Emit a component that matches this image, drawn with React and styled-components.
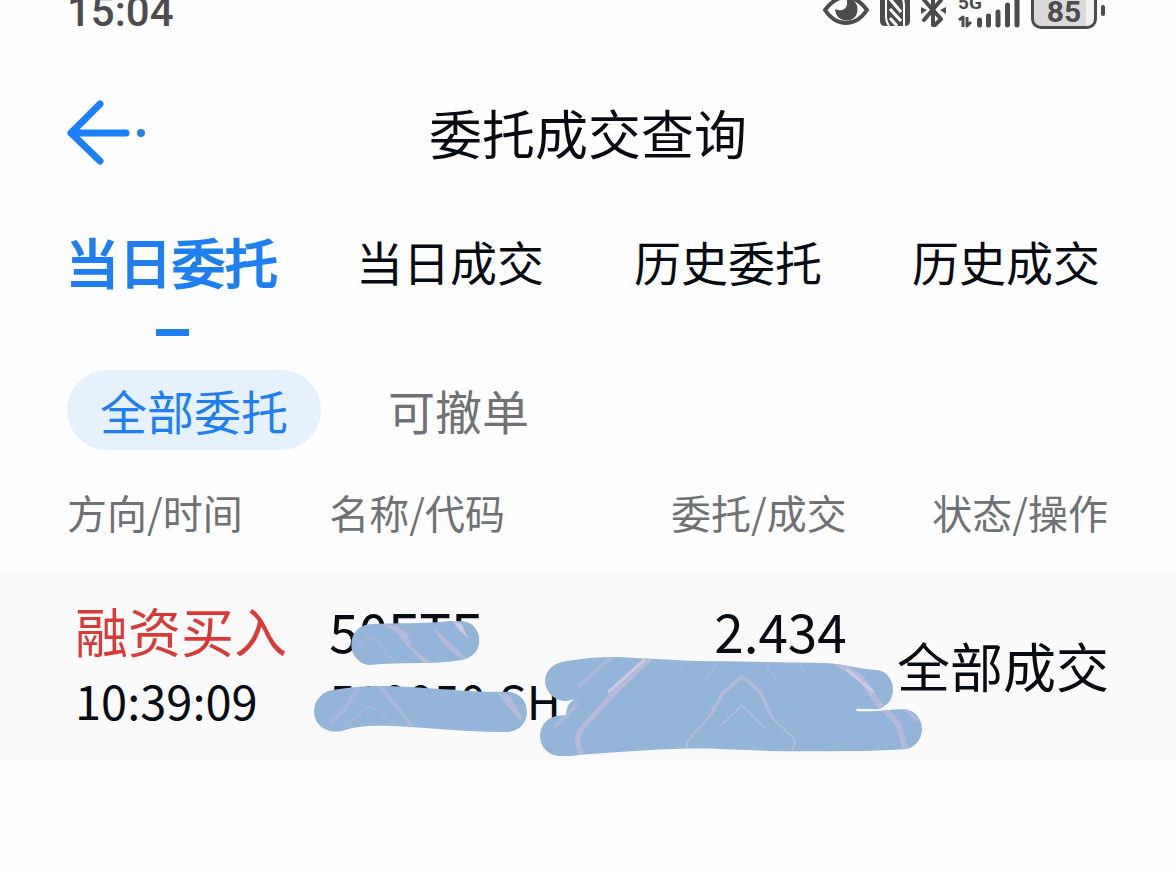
import React, { useState } from 'react';
import styled, { createGlobalStyle, ThemeProvider } from 'styled-components';

const theme = {
  bg: { page: '#fefefe', row: '#fafafa', pill: '#e5f1fd' },
  text: { default: '#080c12', secondary: '#6f7275', status: '#4c4c4c' },
  brand: '#1f7ff0',
  buy: '#d93a38',
  brush: '#93b5da',
  streak: '#b3bbd9',
  streakLight: '#cdc9de',
};

const GlobalStyle = createGlobalStyle`
  * {
    box-sizing: border-box;
  }
  body {
    margin: 0;
    background: ${theme.bg.page};
    color: ${theme.text.default};
    font-family: 'Noto Sans CJK SC', 'Noto Sans', sans-serif;
  }
  button {
    padding: 0;
    border: none;
    background: none;
    color: inherit;
    font: inherit;
    cursor: pointer;
  }
`;

const StatusBar = styled.div`
  display: flex;
  justify-content: space-between;
  align-items: flex-start;
  height: 30px;
  padding: 0 71px 0 67px;
  color: ${(p) => p.theme.text.status};
  font-family: Roboto, sans-serif;
`;

const Clock = styled.time`
  font-size: 42px;
  font-weight: 500;
  line-height: 24px;
`;

const StatusIcons = styled.div`
  display: flex;
  align-items: flex-start;
  gap: 11px;
  svg {
    display: block;
  }
`;

const Network = styled.div`
  position: relative;
`;

const NetworkLabel = styled.span`
  position: absolute;
  top: 0;
  left: 0;
  font-size: 19px;
  font-weight: 700;
  line-height: 6px;
`;

const Battery = styled.div`
  display: flex;
  align-items: flex-start;
  gap: 4px;
  &::after {
    content: '';
    width: 4px;
    height: 11px;
    margin-top: 5px;
    border-radius: 2px;
    background: currentColor;
  }
`;

const BatteryBody = styled.div`
  width: 66px;
  height: 29px;
  border: 3px solid currentColor;
  border-top: none;
  border-radius: 0 0 10px 10px;
  background: linear-gradient(to right, #dadada 87%, #f0f0f0 87%);
  font-size: 30px;
  font-weight: 700;
  line-height: 24px;
  text-align: center;
`;

const Header = styled.header`
  display: grid;
  grid-template-columns: 1fr auto 1fr;
  align-items: center;
  height: 80px;
  margin-top: 62px;
  padding: 0 66px;
`;

const BackButton = styled.button`
  justify-self: start;
  color: #1a80fb;
  svg {
    display: block;
  }
`;

const Title = styled.h1`
  margin: 0;
  font-size: 53px;
  font-weight: 400;
  line-height: 80px;
`;

const Tabs = styled.nav`
  display: grid;
  grid-template-columns: repeat(4, 1fr);
  margin-top: 61px;
  padding: 0 31px 0 33px;
`;

const Tab = styled.button`
  display: flex;
  flex-direction: column;
  align-items: center;
  gap: 40px;
  color: ${(p) => (p.$active ? p.theme.brand : 'inherit')};
  font-size: ${(p) => (p.$active ? '53px' : '47px')};
  line-height: 56px;
  white-space: nowrap;
  -webkit-text-stroke: ${(p) => (p.$active ? '2px' : '0')};
  &::after {
    content: '';
    width: 33px;
    height: 7px;
    background: ${(p) => (p.$active ? p.theme.brand : 'transparent')};
  }
`;

const Filters = styled.div`
  display: flex;
  gap: 34px;
  margin-top: 34px;
  padding: 0 67px;
`;

const Filter = styled.button`
  && {
    padding: 0 33px;
  }
  border-radius: 40px;
  background: ${(p) => (p.$active ? p.theme.bg.pill : 'transparent')};
  color: ${(p) => (p.$active ? p.theme.brand : p.theme.text.secondary)};
  font-size: 47px;
  line-height: 80px;
`;

const Orders = styled.table`
  width: 100%;
  table-layout: fixed;
  border-collapse: collapse;
  white-space: nowrap;
`;

const HeadCell = styled.th`
  width: ${(p) => p.$width};
  height: 123px;
  padding: 0;
  color: ${(p) => p.theme.text.secondary};
  font-size: 40px;
  font-weight: 400;
  text-align: ${(p) => p.$align || 'left'};
  &:first-child {
    padding-left: 67px;
  }
  &:last-child {
    padding-right: 68px;
  }
`;

const Row = styled.tr`
  background: ${(p) => p.theme.bg.row};
`;

const Cell = styled.td`
  position: relative;
  height: 187px;
  padding: 22px 0 25px;
  text-align: ${(p) => p.$align || 'left'};
  vertical-align: top;
  &:first-child {
    padding-left: 75px;
  }
  &:last-child {
    padding-right: 67px;
    vertical-align: middle;
  }
`;

const Primary = styled.div`
  color: ${(p) => (p.$buy ? p.theme.buy : 'inherit')};
  font-size: 53px;
  line-height: 70px;
`;

const Secondary = styled.div`
  font-size: 47px;
  line-height: 70px;
`;

const Brush = styled.svg`
  position: absolute;
  top: 0;
  left: -29px;
  pointer-events: none;
`;

const EyeIcon = () => (
  <svg width="46" height="30" viewBox="0 0 46 30" aria-hidden="true">
    <path
      d="M2 10C8 2 15-3 23-3s15 5 21 13c-6 9-13 13-21 13S8 19 2 10Z"
      fill="none"
      stroke="currentColor"
      strokeWidth="4"
      strokeLinejoin="round"
    />
    <path d="M23-2C36-1 37 12 31 18c-6 5-18 3-19-9 8 4 15-2 11-11Z" fill="currentColor" />
  </svg>
);

const NfcIcon = () => (
  <svg width="30" height="30" viewBox="0 0 30 30" aria-hidden="true">
    <path d="M0-4h30v25q0 5-5 5H5q-5 0-5-5Z" fill="currentColor" />
    <path d="M6-4v21q0 5 3 9M24 26V5q0-5-3-9" fill="none" stroke="#fefefe" strokeWidth="2" />
    <path d="M10-1l11 13M10 9l11 12M10 18l7 8" fill="none" stroke="#fefefe" strokeWidth="3" />
  </svg>
);

const BluetoothIcon = () => (
  <svg width="26" height="30" viewBox="0 0 26 30" aria-hidden="true">
    <path
      d="M3 0l17 19-6 6h-2V-6l8 6L3 20"
      fill="none"
      stroke="currentColor"
      strokeWidth="4"
      strokeLinejoin="round"
      strokeLinecap="round"
    />
    <path d="M0 7l6 3-6 4ZM25 7l-6 3 6 4Z" fill="currentColor" />
  </svg>
);

const SignalIcon = () => (
  <svg width="62" height="30" viewBox="0 0 62 30" aria-hidden="true">
    <path
      d="M1 20l4-3v10M9 17v9l4-4"
      fill="none"
      stroke="currentColor"
      strokeWidth="3"
      strokeLinejoin="round"
    />
    <path
      d="M21.500 20v5M30.500 16v9M40 12v13M49.500 5v20M59-4v29"
      fill="none"
      stroke="currentColor"
      strokeWidth="5"
      strokeLinecap="round"
    />
  </svg>
);

const BackIcon = () => (
  <svg width="80" height="66" viewBox="0 0 80 66" aria-hidden="true">
    <path
      d="M34 5L5 34l29 28M5 34h55"
      fill="none"
      stroke="currentColor"
      strokeWidth="7"
      strokeLinecap="round"
      strokeLinejoin="round"
    />
    <circle cx="75" cy="34" r="4" fill="#2d82e0" />
  </svg>
);

// marker strokes that hide the private part of the order
const BrushMarks = () => (
  <Brush width="640" height="187" viewBox="0 -51 1920 561" aria-hidden="true">
    <defs>
      <clipPath id="brush-shape">
        <path d="M211 103C280 98 380 102 450 93Q470 91 485 93C518 96 538 120 538 151C538 185 515 204 486 210C400 225 300 215 211 225C178 224 154 196 154 164C154 128 178 105 211 103Z" />
        <path d="M103 299C150 292 200 287 260 288C360 290 460 303 560 305L625 305C660 308 681 334 681 366C681 400 656 424 622 426C520 428 400 414 280 408C220 406 170 408 135 420C118 426 103 426 88 422C60 415 42 393 42 362C43 328 70 302 103 299Z" />
        <path d="M800 213C850 205 900 200 955 201C1060 206 1160 214 1280 214L1580 219C1630 222 1680 238 1730 240C1762 244 1779 270 1779 299C1779 328 1760 352 1730 358L1670 356L1669 363C1720 367 1770 358 1812 358C1845 360 1867 388 1866 419C1865 450 1843 475 1812 478C1700 486 1580 483 1450 484C1340 483 1250 472 1140 476C1040 478 940 488 840 494C815 498 795 500 775 498C744 495 720 470 720 438C720 405 744 380 775 377L798 375C798 352 808 337 824 328L800 333C764 333 736 306 735 272C736 240 762 218 800 213Z" />
      </clipPath>
    </defs>
    <g clipPath="url(#brush-shape)">
      <rect x="0" y="60" width="1920" height="450" fill={theme.brush} />
      <g fill="none" stroke={theme.streak} strokeLinejoin="round">
        <path d="M175 170l32-31 35 24 38 50" strokeWidth="15" opacity="0.35" />
        <path d="M248 102l40 6 34 22 12 40 56 47-18 3-54-54-22-34Z" fill={theme.streak} stroke="none" />
        <path d="M396 110l75 66 38 38-36-16-42-34Z" fill={theme.streak} stroke="none" />
        <path d="M455 90l30 12 20 45-30-30Z" fill={theme.streakLight} stroke="none" />
        <path d="M90 400l42-40 45-68" strokeWidth="15" opacity="0.6" />
        <path d="M137 405l75-58 70 55" strokeWidth="6" opacity="0.55" />
        <path d="M235 285l65 76 38 50" strokeWidth="12" opacity="0.7" />
        <path d="M590 306l40 12 40 70-14 2-38-48Z" fill={theme.streak} stroke="none" />
        <path d="M835 290l55-50 47-40" strokeWidth="12" opacity="0.7" />
        <path d="M760 413l42-37 32-38" strokeWidth="12" opacity="0.7" />
        <path d="M845 490C825 460 830 435 850 410L899 357 954 297 1050 205" strokeWidth="16" />
        <path d="M924 307l110-98" stroke={theme.streakLight} strokeWidth="9" />
        <path d="M1137 237l25-24M1070 330l30-27M917 400l25-25" strokeWidth="5" opacity="0.5" />
        <path d="M1217 270l32-49M1390 215l42 57M1490 214l27 29" strokeWidth="9" opacity="0.45" />
        <path d="M1170 480q-16-12-7-27l70-80 35-63 58-51 55 47 35 77 63 60q12 16-4 37" strokeWidth="6" />
        <path d="M1233 373l35-63 58-51 55 47 35 77" strokeWidth="11" />
        <path d="M1261 408l65-62 67 68" strokeWidth="6" opacity="0.9" />
        <path d="M1555 305l22 22M1492 422l28 24" strokeWidth="5" opacity="0.4" />
        <path d="M1610 219l75 47 43 65 65 69 25 80" strokeWidth="18" />
        <path d="M1640 238l80 68" stroke={theme.streakLight} strokeWidth="9" />
        <path d="M1815 358l40 36" strokeWidth="8" />
      </g>
    </g>
  </Brush>
);

const TABS = ['当日委托', '当日成交', '历史委托', '历史成交'];
const FILTERS = ['全部委托', '可撤单'];

const App = () => {
  const [tab, setTab] = useState(TABS[0]);
  const [filter, setFilter] = useState(FILTERS[0]);

  return (
    <ThemeProvider theme={theme}>
      <GlobalStyle />
      <StatusBar>
        <Clock>15:04</Clock>
        <StatusIcons>
          <EyeIcon />
          <NfcIcon />
          <BluetoothIcon />
          <Network>
            <NetworkLabel>5G</NetworkLabel>
            <SignalIcon />
          </Network>
          <Battery>
            <BatteryBody>85</BatteryBody>
          </Battery>
        </StatusIcons>
      </StatusBar>

      <Header>
        <BackButton type="button" aria-label="返回">
          <BackIcon />
        </BackButton>
        <Title>委托成交查询</Title>
      </Header>

      <main>
        <Tabs>
          {TABS.map((name) => (
            <Tab key={name} type="button" $active={name === tab} onClick={() => setTab(name)}>
              {name}
            </Tab>
          ))}
        </Tabs>

        <Filters>
          {FILTERS.map((name) => (
            <Filter key={name} type="button" $active={name === filter} onClick={() => setFilter(name)}>
              {name}
            </Filter>
          ))}
        </Filters>

        <Orders>
          <thead>
            <tr>
              <HeadCell $width="28%">方向/时间</HeadCell>
              <HeadCell $width="22%">名称/代码</HeadCell>
              <HeadCell $width="22%" $align="right">
                委托/成交
              </HeadCell>
              <HeadCell $width="28%" $align="right">
                状态/操作
              </HeadCell>
            </tr>
          </thead>
          <tbody>
            <Row>
              <Cell>
                <Primary $buy>融资买入</Primary>
                <Secondary>10:39:09</Secondary>
              </Cell>
              <Cell>
                <Primary>50ETF</Primary>
                <Secondary>510050.SH</Secondary>
                <BrushMarks />
              </Cell>
              <Cell $align="right">
                <Primary>2.434</Primary>
              </Cell>
              <Cell $align="right">
                <Primary>全部成交</Primary>
              </Cell>
            </Row>
          </tbody>
        </Orders>
      </main>
    </ThemeProvider>
  );
};

export default App;
